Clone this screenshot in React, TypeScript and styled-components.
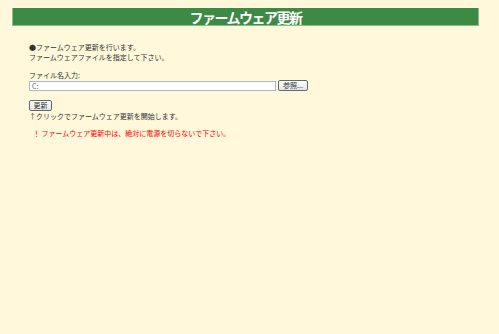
import React from 'react';
import styled, { createGlobalStyle } from 'styled-components';

const GlobalStyle = createGlobalStyle`
  html, body {
    margin: 0;
    padding: 0;
    background: #fff8da;
  }
  body {
    font-family: "Noto Sans CJK JP", "Liberation Sans", sans-serif;
    width: 499px;
    height: 334px;
    overflow: hidden;
  }
`;

const Page = styled.div`
  padding: 8px 20px 0 12px;
`;

const TitleBar = styled.h1`
  margin: 0;
  height: 18px;
  background: #3d8a45;
  border-left: 1px solid #86c08a;
  border-right: 1px solid #86c08a;
  border-bottom: 1px solid #86c08a;
  box-sizing: border-box;
  color: #fff;
  font-size: 14px;
  font-weight: bold;
  line-height: 18px;
  text-align: center;
  letter-spacing: -1.5px;
`;

const Content = styled.div`
  padding: 16px 0 0 17px;
  font-size: 7px;
  line-height: 10px;
  color: #333;
`;

const Para = styled.p<{ $gap?: number; $red?: boolean }>`
  margin: 0 0 ${p => p.$gap ?? 0}px;
  color: ${p => (p.$red ? '#ff0000' : '#333')};
  padding-left: ${p => (p.$red ? 4 : 0)}px;
`;

const FileRow = styled.div`
  display: flex;
  align-items: center;
  gap: 2px;
  margin-bottom: 9px;
`;

const FileInput = styled.div`
  width: 247px;
  height: 10px;
  box-sizing: border-box;
  background: #fff;
  border: 1px solid #a7b9c9;
  font-size: 7px;
  line-height: 8px;
  padding-left: 2px;
  color: #666;
`;

const Btn = styled.button<{ $w: number }>`
  width: ${p => p.$w}px;
  height: 11px;
  padding: 0;
  box-sizing: border-box;
  border: 1px solid #5b6a7a;
  border-radius: 2px;
  background: linear-gradient(#fdfdfd, #e6e6e0);
  font-family: "Noto Sans CJK JP", sans-serif;
  font-size: 7px;
  line-height: 9px;
  color: #333;
  display: block;
`;

export default function App() {
  return (
    <>
      <GlobalStyle />
      <Page>
        <TitleBar>ファームウェア更新</TitleBar>
        <Content>
          <Para>●ファームウェア更新を行います。</Para>
          <Para $gap={8}>ファームウェアファイルを指定して下さい。</Para>
          <Para>ファイル名入力:</Para>
          <FileRow>
            <FileInput>C:</FileInput>
            <Btn $w={30}>参照...</Btn>
          </FileRow>
          <Btn $w={23}>更新</Btn>
          <Para $gap={7}>↑クリックでファームウェア更新を開始します。</Para>
          <Para $red>！ ファームウェア更新中は、絶対に電源を切らないで下さい。</Para>
        </Content>
      </Page>
    </>
  );
}
